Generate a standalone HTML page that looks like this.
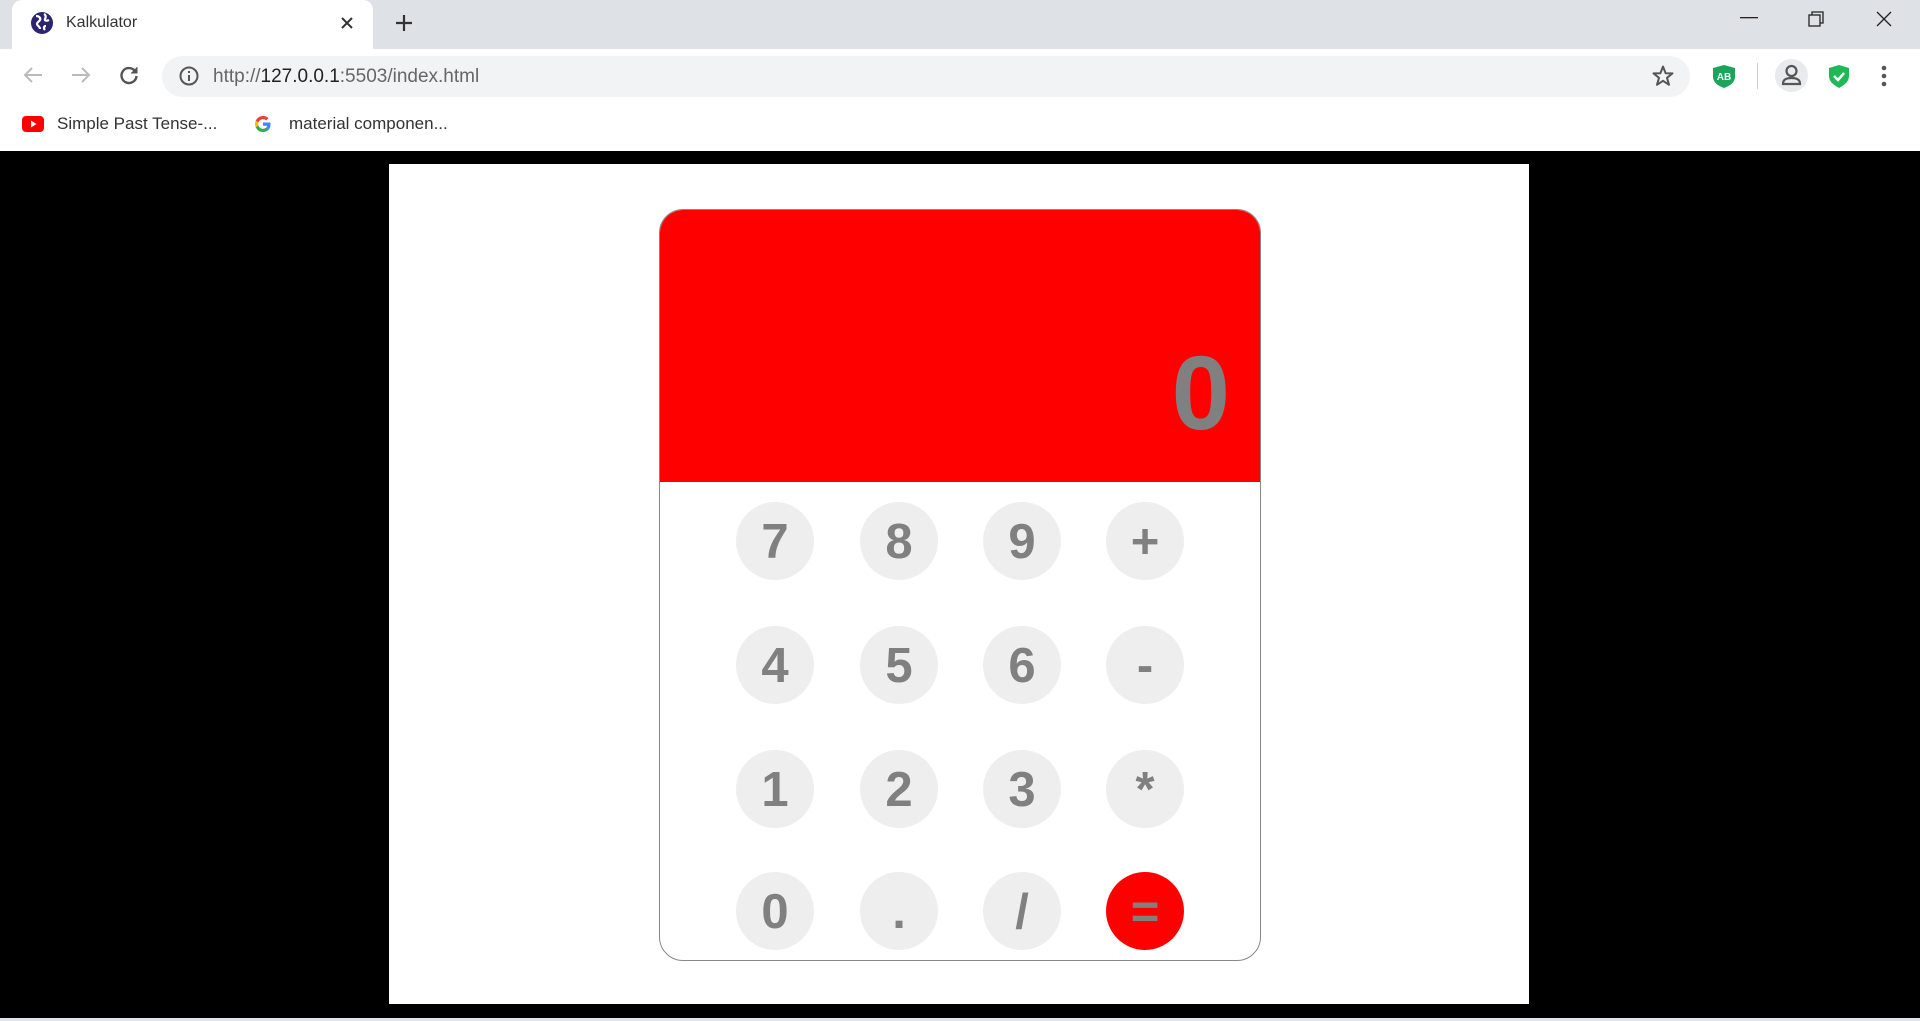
<!DOCTYPE html>
<html><head><meta charset="utf-8"><style>
*{margin:0;padding:0;box-sizing:border-box}
body{width:1920px;height:1021px;overflow:hidden;background:#000;font-family:"Liberation Sans",Arial,sans-serif;position:relative}
.abs{position:absolute}
#tabbar{left:0;top:0;width:1920px;height:49px;background:#dee1e6}
#tab{left:12px;top:0;width:361px;height:50px;background:#fff;border-radius:10px 10px 0 0}
#toolbar{left:0;top:49px;width:1920px;height:54px;background:#fff}
#bm{left:0;top:103px;width:1920px;height:48px;background:#fff}
#omni{left:162px;top:56px;width:1528px;height:41px;background:#f1f3f4;border-radius:21px}
.t{position:absolute;white-space:nowrap}
#page{left:389px;top:164px;width:1140px;height:840px;background:#fff}
#calc{left:659px;top:209px;width:602px;height:752px;border:1px solid #888;border-radius:24px;overflow:hidden;background:#fff}
#disp{left:0;top:0;width:600px;height:272px;background:#f00}
#num{right:30px;top:131px;font-size:105px;font-weight:bold;color:#808080;line-height:1}
.b{position:absolute;width:78px;height:78px;border-radius:50%;background:#eee;color:#808080;font-weight:bold;font-size:49px;text-align:center;line-height:80px}
</style></head><body>
<div class="abs" id="tabbar"></div>
<div class="abs" id="tab"></div>
<svg class="abs" style="left:30px;top:11px" width="24" height="24" viewBox="0 0 24 24"><circle cx="12" cy="12" r="11" fill="#2a2473"/><path d="M6 5c3 0 5 2 4 4s-3 2-3 4 3 2 3 5M14 3c2 1 2 3 1 5s2 2 4 1M16 15c-2 0-3 2-1 4" stroke="#fff" stroke-width="2.2" fill="none"/></svg>
<div class="t" style="left:66px;top:14px;font-size:16px;color:#333">Kalkulator</div>
<svg class="abs" style="left:340px;top:16px" width="14" height="14"><path d="M2 2L12 12M12 2L2 12" stroke="#333" stroke-width="2"/></svg>
<svg class="abs" style="left:395px;top:14px" width="18" height="18"><path d="M9 1V17M1 9H17" stroke="#333" stroke-width="2.2"/></svg>
<svg class="abs" style="left:1740px;top:17px" width="18" height="2"><rect width="18" height="1.3" fill="#222"/></svg>
<svg class="abs" style="left:1808px;top:11px" width="16" height="16" fill="none" stroke="#222" stroke-width="1.3"><rect x="1" y="4" width="11" height="11"/><path d="M4 4V1H15V12H12"/></svg>
<svg class="abs" style="left:1876px;top:11px" width="16" height="16"><path d="M1 1L15 15M15 1L1 15" stroke="#222" stroke-width="1.3"/></svg>
<div class="abs" id="toolbar"></div>
<div class="abs" id="bm"></div>
<svg class="abs" style="left:22px;top:64px" width="22" height="22" fill="none" stroke="#bbb" stroke-width="2"><path d="M20 11H3M10 4L3 11L10 18"/></svg>
<svg class="abs" style="left:70px;top:64px" width="22" height="22" fill="none" stroke="#bbb" stroke-width="2"><path d="M2 11H19M12 4L19 11L12 18"/></svg>
<svg class="abs" style="left:118px;top:64px" width="22" height="22" fill="none" stroke="#555" stroke-width="2.4"><path d="M17 7A7.5 7.5 0 1 0 18.5 12"/><path d="M19 3V9H13" fill="#555" stroke-width="1"/></svg>
<div class="abs" id="omni"></div>
<svg class="abs" style="left:178px;top:65px" width="22" height="22"><circle cx="11" cy="11" r="8.5" fill="none" stroke="#555" stroke-width="2"/><rect x="10" y="10" width="2" height="6" fill="#555"/><rect x="10" y="6" width="2" height="2" fill="#555"/></svg>
<div class="t" style="left:213px;top:66px;font-size:19px;color:#666">http://<span style="color:#222">127.0.0.1</span>:5503/index.html</div>
<svg class="abs" style="left:1651px;top:64px" width="24" height="24"><path d="M12 2.5L14.6 9.2L21.5 9.4L16 13.8L18 20.8L12 16.8L6 20.8L8 13.8L2.5 9.4L9.4 9.2Z" fill="none" stroke="#555" stroke-width="2" stroke-linejoin="round"/></svg>
<svg class="abs" style="left:1712px;top:64px" width="24" height="25"><path d="M12 1L23 4V13C23 18 18 22 12 24C6 22 1 18 1 13V4Z" fill="#1ba45a"/><text x="12" y="16" font-size="10" font-weight="bold" fill="#fff" text-anchor="middle" font-family="Liberation Sans">AB</text></svg>
<div class="abs" style="left:1757px;top:63px;width:1px;height:26px;background:#ccc"></div>
<div class="abs" style="left:1775px;top:59px;width:33px;height:33px;border-radius:50%;background:#e8eaed"></div>
<svg class="abs" style="left:1779px;top:63px" width="25" height="25" fill="none" stroke="#555" stroke-width="2.2"><circle cx="12.5" cy="8" r="5"/><path d="M4 21C4 16 8 15 12.5 15S21 16 21 21Z"/></svg>
<svg class="abs" style="left:1828px;top:64px" width="22" height="25"><path d="M11 1L21 4V12C21 18 16 21 11 24C6 21 1 18 1 12V4Z" fill="#1db954"/><path d="M6 12L10 16L16 9" stroke="#fff" stroke-width="2.5" fill="none"/></svg>
<svg class="abs" style="left:1880px;top:64px" width="8" height="24" fill="#555"><circle cx="4" cy="4" r="2.3"/><circle cx="4" cy="12" r="2.3"/><circle cx="4" cy="20" r="2.3"/></svg>
<svg class="abs" style="left:22px;top:116px" width="22" height="16"><rect width="22" height="16" rx="4" fill="#f00"/><path d="M9 4.5L14.5 8L9 11.5Z" fill="#fff"/></svg>
<div class="t" style="left:57px;top:114px;font-size:17px;color:#333">Simple Past Tense-...</div>
<svg class="abs" style="left:254px;top:115px" width="18" height="18" viewBox="0 0 18 18"><path d="M16.5 9.2c0-.6 0-1.2-.2-1.7H9v3.3h4.2a3.6 3.6 0 0 1-1.6 2.4v2h2.6c1.5-1.4 2.300-3.5 2.300-6z" fill="#4285f4"/><path d="M9 17c2.2 0 4-.7 5.2-2l-2.6-2a4.8 4.8 0 0 1-7.2-2.5H1.8v2A8 8 0 0 0 9 17z" fill="#34a853"/><path d="M4.4 10.5a4.8 4.8 0 0 1 0-3V5.5H1.8a8 8 0 0 0 0 7z" fill="#fbbc05"/><path d="M9 4.2c1.2 0 2.3.4 3.2 1.2l2.3-2.3A8 8 0 0 0 1.8 5.5l2.6 2A4.8 4.8 0 0 1 9 4.2z" fill="#ea4335"/></svg>
<div class="t" style="left:289px;top:114px;font-size:17px;color:#333">material componen...</div>
<div class="abs" style="left:0;top:1018px;width:1920px;height:3px;background:#dde4ea"></div>
<div class="abs" id="page"></div>
<div class="abs" id="calc">
 <div class="abs" id="disp"><div class="abs" id="num">0</div></div>
 <div class="b" style="left:76px;top:292px">7</div><div class="b" style="left:200px;top:292px">8</div><div class="b" style="left:323px;top:292px">9</div><div class="b" style="left:446px;top:292px">+</div>
 <div class="b" style="left:76px;top:416px">4</div><div class="b" style="left:200px;top:416px">5</div><div class="b" style="left:323px;top:416px">6</div><div class="b" style="left:446px;top:416px">-</div>
 <div class="b" style="left:76px;top:540px">1</div><div class="b" style="left:200px;top:540px">2</div><div class="b" style="left:323px;top:540px">3</div><div class="b" style="left:446px;top:540px">*</div>
 <div class="b" style="left:76px;top:662px">0</div><div class="b" style="left:200px;top:662px">.</div><div class="b" style="left:323px;top:662px">/</div><div class="b" style="left:446px;top:662px;background:#f00">=</div>
</div>
</body></html>
